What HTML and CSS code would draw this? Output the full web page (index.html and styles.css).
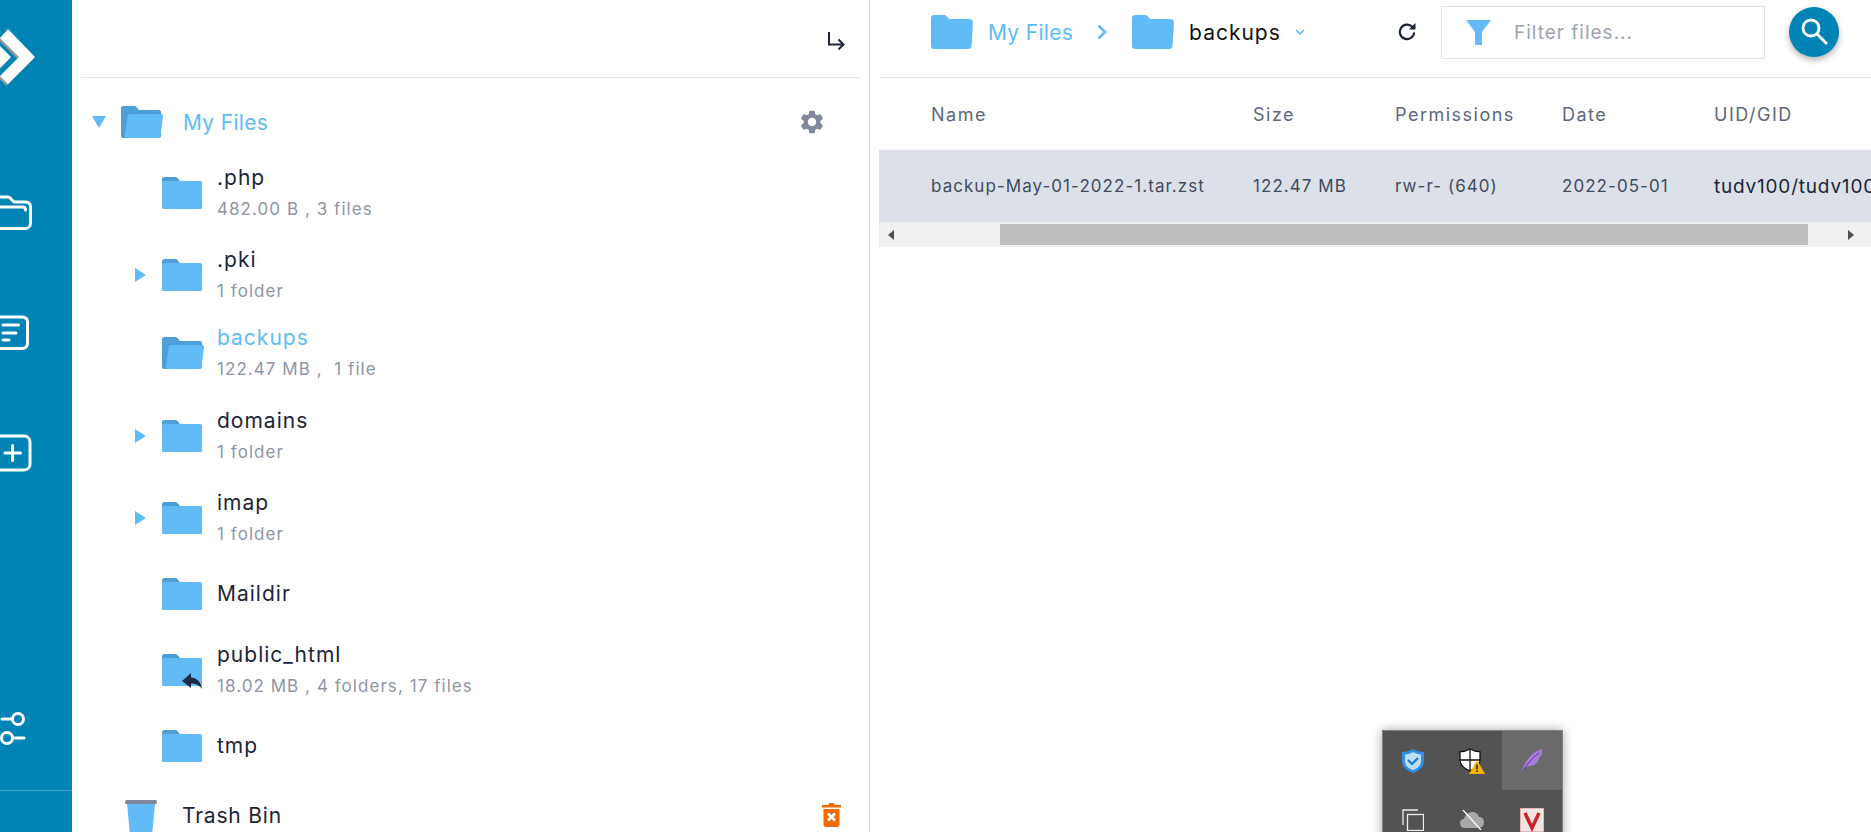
FILE: index.html
```html
<!DOCTYPE html>
<html lang="en">
<head>
    <meta charset="UTF-8">
    <title>File Manager</title>
    <link rel="stylesheet" href="styles.css">
</head>
<body>

<svg class="defs" width="0" height="0">
    <symbol id="folder" viewBox="0 0 40 32">
        <path d="M2 0h11c1 0 2 .5 2.600 1.200L18 4h20c1 0 2 1 2 2v24c0 1-1 2-2 2H2c-1 0-2-1-2-2V2c0-1 1-2 2-2z" fill="#4d9fd8"/>
        <path d="M2 4h36c1 0 2 1 2 2v24c0 1-1 2-2 2H2c-1 0-2-1-2-2V6c0-1 1-2 2-2z" fill="#60bbf7"/>
    </symbol>
    <symbol id="folder-open" viewBox="0 0 42 32">
        <path d="M2 0h11c1 0 2 .5 2.600 1.200L18 4h20c1 0 2 1 2 2v24c0 1-1 2-2 2H2c-1 0-2-1-2-2V2c0-1 1-2 2-2z" fill="#4d9fd8"/>
        <path d="M9 8h31c1.300 0 2.200 1 2 2.200l-2.500 19.800c-.2 1.200-1 2-2.500 2H6c-1.500 0-2.200-1-2-2.200L6.700 10c.2-1.200 1-2 2.300-2z" fill="#60bbf7"/>
    </symbol>
    <symbol id="folder-flat" viewBox="0 0 42 34">
        <path d="M3 0h10c1 0 2 .5 2.700 1.300L18 4h20c2 0 4 1 4 3.500l-1.500 23.500c-.1 1.800-1.500 3-3 3H3c-1.700 0-3-1.300-3-3V3c0-1.700 1.300-3 3-3z" fill="#60bbf7"/>
    </symbol>
    <symbol id="caret-right" viewBox="0 0 11 14">
        <path d="M0 0l11 7-11 7z" fill="#60bbf7"/>
    </symbol>
</svg>

<aside class="sidebar">
    <svg class="side-logo" width="40" height="64" viewBox="0 0 40 64">
        <g fill="#9a9a9a" transform="translate(-1.500 2)">
            <polygon points="8,4 35,32 8,59 0,51 19,32 0,13"/>
            <polygon points="-10,11 11,32 -10,53 -3,32"/>
        </g>
        <g fill="#fff">
            <polygon points="8,4 35,32 8,59 0,51 19,32 0,13"/>
            <polygon points="-10,11 11,32 -10,53 -3,32"/>
        </g>
    </svg>
    <svg class="side-icon side-icon-files" width="40" height="36" viewBox="0 0 40 36" fill="none" stroke="#fff" stroke-width="3" stroke-linecap="round" stroke-linejoin="round">
        <path d="M-8 14V5c0-2 1-3 3-3H8c1.500 0 2.500 1 3.500 2.500L14 7h11.500c3.500 0 5 2 5 5v16c0 3-2 5.500-5 5.500H-8"/>
        <path d="M-8 12H23c1.500 0 2.500 1 2.500 3"/>
    </svg>
    <svg class="side-icon side-icon-notes" width="40" height="36" viewBox="0 0 40 36" fill="none" stroke="#fff" stroke-width="3" stroke-linecap="round">
        <path d="M-8 2H22c3.500 0 5.500 2 5.500 5v21c0 3.500-2 5.500-5.500 5.500H-8"/>
        <path d="M3 10H18.500M3 18H16M3 25H9"/>
    </svg>
    <svg class="side-icon side-icon-add" width="40" height="38" viewBox="0 0 40 38" fill="none" stroke="#fff" stroke-width="3" stroke-linecap="round">
        <path d="M-8 2H24c3.500 0 6 2.500 6 6v22c0 3.500-2.500 6-6 6H-8"/>
        <path d="M5 19H20.500M12.500 11.500V26.500"/>
    </svg>
    <svg class="side-icon side-icon-settings" width="40" height="38" viewBox="0 0 40 38" fill="none" stroke="#fff" stroke-width="3" stroke-linecap="round">
        <circle cx="18" cy="8" r="5.500"/>
        <circle cx="7" cy="27" r="5.500"/>
        <path d="M2 8H12.500M12.500 27H24"/>
    </svg>
    <div class="side-foot"></div>
</aside>

<section class="tree-panel">
    <div class="tree-top">
        <svg class="tree-collapse" width="18" height="18" viewBox="0 0 18 18" fill="none" stroke="#1c2536" stroke-width="2">
            <path d="M2 0V12.500H16M11.500 7.500l5 5-5 5"/>
        </svg>
    </div>
    <div class="tree">
        <div class="tree-root">
            <svg class="root-caret" width="14" height="12" viewBox="0 0 14 12"><path d="M0 0h14L7 12z" fill="#60bbf7"/></svg>
            <svg class="root-folder" width="42" height="32"><use href="#folder-open"/></svg>
            <span class="root-name">My Files</span>
            <svg class="gear" width="28" height="28" viewBox="0 0 24 24"><path fill="#7f889d" d="M19.140 12.940c.04-.3.06-.61.06-.94 0-.32-.02-.64-.07-.94l2.030-1.580a.49.49 0 0 0 .12-.61l-1.920-3.320a.488.488 0 0 0-.59-.22l-2.390.96c-.5-.38-1.030-.7-1.620-.94l-.36-2.540a.484.484 0 0 0-.48-.41h-3.840c-.24 0-.43.17-.47.41l-.36 2.540c-.59.24-1.130.57-1.620.94l-2.390-.96c-.22-.08-.47 0-.59.22L2.740 8.870c-.12.21-.08.47.12.61l2.030 1.580c-.05.3-.09.63-.09.94s.02.64.07.94l-2.030 1.580a.49.49 0 0 0-.12.61l1.920 3.320c.12.22.37.29.59.22l2.390-.96c.5.38 1.030.7 1.620.94l.36 2.540c.05.24.24.41.48.41h3.840c.24 0 .44-.17.47-.41l.36-2.540c.59-.24 1.130-.56 1.620-.94l2.390.96c.22.08.47 0 .59-.22l1.920-3.320c.12-.22.07-.47-.12-.61l-2.010-1.580zM12 15.600c-1.980 0-3.600-1.620-3.600-3.600s1.620-3.600 3.600-3.600 3.600 1.620 3.600 3.600-1.620 3.600-3.600 3.600z"/></svg>
        </div>

        <div class="tree-item">
            <span class="caret-slot"></span>
            <svg class="item-folder" width="40" height="32"><use href="#folder"/></svg>
            <div class="item-text">
                <div class="item-name">.php</div>
                <div class="item-meta">482.00 B , 3 files</div>
            </div>
        </div>
        <div class="tree-item">
            <span class="caret-slot"><svg width="11" height="14"><use href="#caret-right"/></svg></span>
            <svg class="item-folder" width="40" height="32"><use href="#folder"/></svg>
            <div class="item-text">
                <div class="item-name">.pki</div>
                <div class="item-meta">1 folder</div>
            </div>
        </div>
        <div class="tree-item tree-item-open">
            <span class="caret-slot"></span>
            <svg class="item-folder" width="42" height="32"><use href="#folder-open"/></svg>
            <div class="item-text item-text-open">
                <div class="item-name">backups</div>
                <div class="item-meta">122.47 MB ,&nbsp; 1 file</div>
            </div>
        </div>
        <div class="tree-item">
            <span class="caret-slot"><svg width="11" height="14"><use href="#caret-right"/></svg></span>
            <svg class="item-folder" width="40" height="32"><use href="#folder"/></svg>
            <div class="item-text">
                <div class="item-name">domains</div>
                <div class="item-meta">1 folder</div>
            </div>
        </div>
        <div class="tree-item">
            <span class="caret-slot"><svg width="11" height="14"><use href="#caret-right"/></svg></span>
            <svg class="item-folder" width="40" height="32"><use href="#folder"/></svg>
            <div class="item-text">
                <div class="item-name">imap</div>
                <div class="item-meta">1 folder</div>
            </div>
        </div>
        <div class="tree-item tree-item-short">
            <span class="caret-slot"></span>
            <svg class="item-folder" width="40" height="32"><use href="#folder"/></svg>
            <div class="item-text">
                <div class="item-name">Maildir</div>
            </div>
        </div>
        <div class="tree-item">
            <span class="caret-slot"></span>
            <span class="link-folder">
                <svg class="item-folder" width="40" height="32"><use href="#folder"/></svg>
                <svg class="link-arrow" width="20" height="16" viewBox="0 0 20 16"><path d="M0 8L9 0v4.500C15 5 19 9 20 16c-3-4-6-5.500-11-5.500V15z" fill="#1c2b45"/></svg>
            </span>
            <div class="item-text">
                <div class="item-name">public_html</div>
                <div class="item-meta">18.02 MB , 4 folders, 17 files</div>
            </div>
        </div>
        <div class="tree-item tree-item-short">
            <span class="caret-slot"></span>
            <svg class="item-folder" width="40" height="32"><use href="#folder"/></svg>
            <div class="item-text">
                <div class="item-name">tmp</div>
            </div>
        </div>

        <div class="trash-row">
            <svg class="trash-bin" width="32" height="46" viewBox="0 0 32 46">
                <path d="M2 3h28l-4 43H6z" fill="#60bbf7"/>
                <rect x="0" y="0" width="32" height="4" rx="1.500" fill="#7f889d"/>
            </svg>
            <span class="trash-name">Trash Bin</span>
            <svg class="trash-empty" width="19" height="24" viewBox="0 0 19 24">
                <path d="M6.500 2V1.500C6.500.7 7 0 8 0h3c1 0 1.500.7 1.500 1.500V2H19v2.500H0V2z" fill="#ef6c00"/>
                <path d="M1.500 6h16v15.500c0 1.400-1 2.500-2.500 2.500H4c-1.500 0-2.500-1.100-2.500-2.500z" fill="#ef6c00"/>
                <path d="M6 10.500l7 7M13 10.500l-7 7" stroke="#fff" stroke-width="2.800"/>
            </svg>
        </div>
    </div>
</section>

<main class="files-panel">
    <div class="files-top">
        <div class="crumbs">
            <svg class="crumb-folder" width="42" height="34"><use href="#folder-flat"/></svg>
            <span class="crumb-root">My Files</span>
            <svg class="crumb-sep" width="10" height="16" viewBox="0 0 10 16" fill="none" stroke="#60bbf7" stroke-width="2.600"><path d="M1.500 1.500L8 8l-6.500 6.500"/></svg>
            <svg class="crumb-folder" width="42" height="34"><use href="#folder-flat"/></svg>
            <span class="crumb-current">backups</span>
            <svg class="crumb-caret" width="10" height="6" viewBox="0 0 10 6" fill="none" stroke="#60bbf7" stroke-width="1.600"><path d="M1 1l4 4 4-4"/></svg>
        </div>
        <svg class="refresh" width="18" height="18" viewBox="0 0 18 18" fill="none" stroke="#1c2536" stroke-width="2.200">
            <path d="M14.500 4.200A7.200 7.200 0 1 0 16.200 9.500"/>
            <path d="M17.500 0v6.500H11z" fill="#1c2536" stroke="none"/>
        </svg>
        <label class="filter-box">
            <svg class="filter-icon" width="25" height="25" viewBox="0 0 25 25"><path d="M0 0h25l-9 12v13H9V12z" fill="#60bbf7"/></svg>
            <input class="filter-input" type="text" placeholder="Filter files...">
        </label>
        <button class="search-btn">
            <svg width="30" height="30" viewBox="0 0 30 30" fill="none" stroke="#fff" stroke-width="2.800"><circle cx="12" cy="11" r="8"/><path d="M18 17l10 10"/></svg>
        </button>
    </div>

    <div class="file-table">
        <div class="file-head">
            <div>Name</div>
            <div>Size</div>
            <div>Permissions</div>
            <div>Date</div>
            <div>UID/GID</div>
        </div>
        <div class="file-row">
            <div>backup-May-01-2022-1.tar.zst</div>
            <div>122.47 MB</div>
            <div>rw-r- (640)</div>
            <div>2022-05-01</div>
            <div class="file-owner">tudv100/tudv100</div>
        </div>
    </div>
    <div class="scrollbar">
        <svg class="scroll-arrow scroll-arrow-left" width="6" height="10" viewBox="0 0 6 10"><path d="M6 0v10L0 5z" fill="#505050"/></svg>
        <div class="scroll-thumb"></div>
        <svg class="scroll-arrow scroll-arrow-right" width="6" height="10" viewBox="0 0 6 10"><path d="M0 0v10l6-5z" fill="#505050"/></svg>
    </div>
</main>

<!-- windows tray flyout caught in the screenshot -->
<div class="tray">
    <div class="tray-cell">
        <svg width="22" height="24" viewBox="0 0 22 24"><path d="M11 0c3 2 7 3 11 3v9c0 6-5 10-11 12C5 22 0 18 0 12V3c4 0 8-1 11-3z" fill="#2f8fe6"/><path d="M11 3c2.500 1.500 5 2.200 8 2.400V12c0 4.500-3.500 7.500-8 9-4.500-1.500-8-4.500-8-9V5.400C6 5.200 8.500 4.500 11 3z" fill="#bcdcf8"/><path d="M6 11l4 4 6-6" fill="none" stroke="#1f78d1" stroke-width="2.200"/></svg>
    </div>
    <div class="tray-cell">
        <svg width="26" height="26" viewBox="0 0 26 26"><path d="M11 1c3 1.800 6 2.600 10 2.600V12c0 5.500-4 8.500-10 11C5 20.500 1 17.500 1 12V3.600C5 3.600 8 2.800 11 1z" fill="#fff" stroke="#111" stroke-width="1.300"/><path d="M11 1v22M1 12h20" stroke="#111" stroke-width="1.300"/><path d="M18 12l8 14H10z" fill="#f5b400"/><path d="M18 16.500v5M18 22.500v1.500" stroke="#222" stroke-width="1.500"/></svg>
    </div>
    <div class="tray-cell tray-cell-hot">
        <svg width="22" height="24" viewBox="0 0 22 24"><path d="M0 24C3 14 10 3 21 0c1 5-1 8-3 9 0 3-3 6-5 7-3 1-6 1-8 2-2 2-3 4-5 6z" fill="#a77bdc"/><path d="M1 23C6 15 11 9 18 4" stroke="#5b3a92" stroke-width="1" fill="none"/></svg>
    </div>
    <div class="tray-cell">
        <svg width="22" height="22" viewBox="0 0 22 22" fill="none" stroke="#eee" stroke-width="1.300"><path d="M1 16V1h15"/><rect x="5.500" y="5.500" width="16" height="16"/></svg>
    </div>
    <div class="tray-cell">
        <svg width="26" height="20" viewBox="0 0 26 20"><path d="M6 18c-3 0-5-2-5-5s2-4 4-4c1-4 4-7 8-7s6 2 7 5c3 0 5 2 5 5s-2 6-5 6z" fill="#a8a8a8"/><path d="M4 0l18 20" stroke="#fff" stroke-width="1.300"/></svg>
    </div>
    <div class="tray-cell">
        <svg width="24" height="24" viewBox="0 0 24 24"><rect width="24" height="24" fill="#f3e3e3" stroke="#d88" stroke-width="1"/><path d="M5 5l7 15 7-15" fill="none" stroke="#c9262c" stroke-width="3.500"/></svg>
    </div>
</div>

</body>
</html>
```

FILE: styles.css
```css
* {
    box-sizing: border-box;
}
html, body {
    height: 100%;
}
body {
    margin: 0;
    display: flex;
    height: 832px;
    overflow: hidden;
    background-color: white;
    font-family: Inter, "Open Sans", sans-serif;
    color: #1c2536;
}
.defs {
    position: absolute;
}

/* left rail */
.sidebar {
    width: 72px;
    flex-shrink: 0;
    display: flex;
    flex-direction: column;
    background-color: #0083b5;
    padding-top: 25px;
}
.sidebar svg {
    display: block;
    overflow: hidden;
}
.side-icon-files {
    margin-top: 106px;
}
.side-icon-notes {
    margin-top: 84px;
}
.side-icon-add {
    margin-top: 83px;
}
.side-icon-settings {
    margin-top: auto;
}
.side-foot {
    height: 42px;
    margin-top: 41px;
    border-top: 1px solid #4aa6cb;
}

/* folder tree */
.tree-panel {
    width: 798px;
    flex-shrink: 0;
    padding: 0 9px;
    border-right: 1px solid #d8d8d8;
}
.tree-top {
    height: 78px;
    border-bottom: 1px solid #e2e2e2;
    display: flex;
    justify-content: flex-end;
    padding: 32px 15px 0 0;
}
.tree-collapse {
    display: block;
}
.tree {
    padding-top: 14px;
}
.tree-root {
    height: 60px;
    display: flex;
    align-items: center;
    padding: 0 34px 0 11px;
}
.root-caret {
    margin-right: 15px;
}
.root-name {
    margin-left: 20px;
    color: #60bbf7;
    font-size: 21px;
    letter-spacing: 0.3px;
}
.gear {
    margin-left: auto;
}
.tree-item {
    height: 82px;
    display: flex;
    align-items: center;
    padding-left: 54px;
}
.tree-item-open {
    margin-top: -4px;
    margin-bottom: 1px;
}
.tree-item-short {
    height: 70px;
}
.caret-slot {
    width: 27px;
    flex-shrink: 0;
    display: flex;
}
.item-folder {
    display: block;
    flex-shrink: 0;
}
.item-text {
    margin-left: 15px;
}
.item-text-open {
    margin-left: 13px;
}
.item-name {
    font-size: 21px;
    line-height: 30px;
    letter-spacing: 1px;
}
.item-meta {
    margin-top: 1px;
    font-size: 17px;
    line-height: 30px;
    color: #8e96a5;
    letter-spacing: 1.05px;
}
.tree-item-open .item-name {
    color: #60bbf7;
}
.link-folder {
    position: relative;
    display: block;
}
.link-arrow {
    position: absolute;
    right: 0;
    bottom: -3px;
}
.trash-row {
    height: 68px;
    display: flex;
    align-items: center;
    padding: 0 19px 0 44px;
}
.trash-bin {
    margin-top: 16px;
    flex-shrink: 0;
}
.trash-name {
    margin-left: 25px;
    font-size: 21px;
    letter-spacing: 0.8px;
}
.trash-empty {
    margin-left: auto;
}

/* file list */
.files-panel {
    flex: 1;
    min-width: 0;
    padding-left: 9px;
}
.files-top {
    height: 78px;
    display: flex;
    align-items: center;
    padding: 0 32px 13px 52px;
    border-bottom: 1px solid #e2e2e2;
}
.crumbs {
    display: flex;
    align-items: center;
}
.crumb-root {
    margin: 0 24px 0 15px;
    color: #60bbf7;
    font-size: 21px;
    letter-spacing: 0.3px;
}
.crumb-sep {
    margin-right: 25px;
}
.crumb-current {
    margin: 0 14px 0 15px;
    font-size: 21px;
    color: #111;
    letter-spacing: 1px;
}
.refresh {
    margin-left: auto;
}
.filter-box {
    width: 324px;
    height: 53px;
    margin: 0 24px 0 25px;
    display: flex;
    align-items: center;
    padding-left: 24px;
    border: 1px solid #dce3ec;
}
.filter-icon {
    flex-shrink: 0;
}
.filter-input {
    flex: 1;
    min-width: 0;
    margin-left: 23px;
    border: none;
    outline: none;
    padding: 0;
    font-family: inherit;
    font-size: 19px;
    letter-spacing: 1px;
}
.filter-input::placeholder {
    color: #9ca3af;
    opacity: 1;
}
.search-btn {
    width: 50px;
    height: 50px;
    flex-shrink: 0;
    padding: 0;
    border: none;
    border-radius: 50%;
    background-color: #0083b5;
    box-shadow: 0 3px 6px rgba(0,0,0,0.3);
    display: flex;
    align-items: center;
    justify-content: center;
}
.file-table {
    overflow: hidden;
}
.file-head, .file-row {
    display: grid;
    grid-template-columns: 322px 142px 167px 152px 200px;
    align-items: center;
    height: 72px;
    padding-left: 52px;
    white-space: nowrap;
}
.file-head {
    font-size: 18px;
    letter-spacing: 1.5px;
    color: #5c677d;
}
.file-row {
    background-color: #dce1e9;
    font-size: 17px;
    letter-spacing: 1.05px;
    color: #3f4a5f;
}
.file-owner {
    font-size: 19px;
    letter-spacing: 0.8px;
    color: #1c2536;
}
.scrollbar {
    height: 25px;
    display: flex;
    align-items: center;
    background-color: #f0f0f0;
}
.scroll-arrow {
    flex-shrink: 0;
}
.scroll-arrow-left {
    margin: 0 106px 0 9px;
}
.scroll-thumb {
    width: 808px;
    height: 21px;
    background-color: #bdbdbd;
}
.scroll-arrow-right {
    margin-left: 40px;
}

/* tray flyout */
.tray {
    position: absolute;
    left: 1382px;
    top: 730px;
    width: 181px;
    height: 130px;
    display: grid;
    grid-template-columns: repeat(3, 1fr);
    grid-auto-rows: 59px;
    background-color: #535353;
    border: 1px solid #808080;
    box-shadow: 0 0 10px rgba(0,0,0,0.35);
}
.tray-cell {
    display: flex;
    align-items: center;
    justify-content: center;
}
.tray-cell-hot {
    background-color: #6a6a6a;
}
```
